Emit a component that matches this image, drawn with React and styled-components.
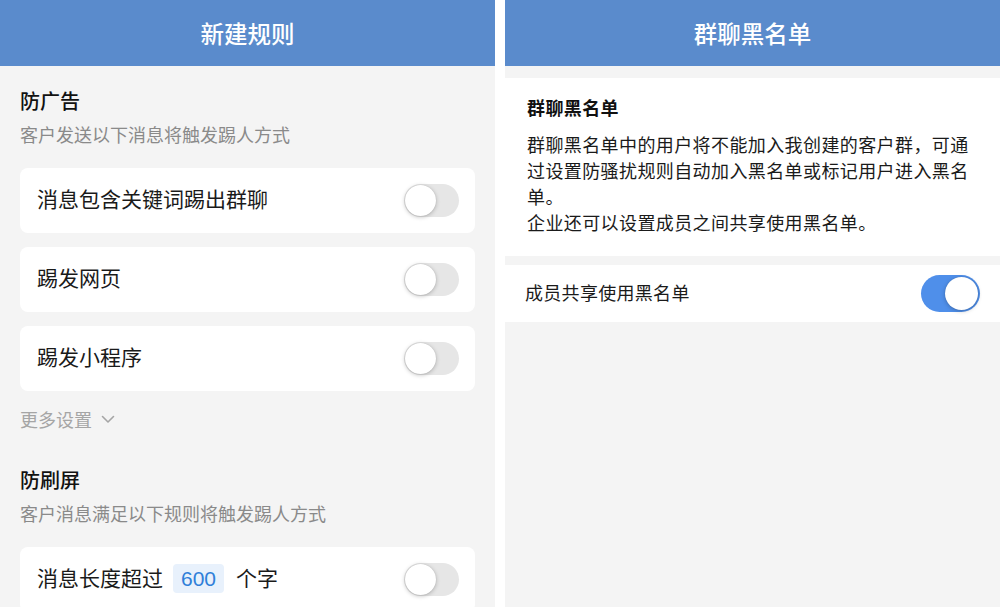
import React from 'react'
import styled, { createGlobalStyle } from 'styled-components'

const Global = createGlobalStyle`
  html, body { margin: 0; padding: 0; background: #ffffff; }
  body { font-family: "Noto Sans CJK SC", "Noto Sans", sans-serif; }
  * { box-sizing: border-box; }
`

const Page = styled.div`
  display: flex;
  gap: 10px;
  width: 1000px;
  height: 607px;
  overflow: hidden;
  background: #ffffff;
`

const Panel = styled.div`
  display: flex;
  flex-direction: column;
  width: ${p => p.width || 'auto'};
  flex: ${p => (p.width ? 'none' : '1')};
  height: 100%;
  background: #f4f4f4;
  overflow: hidden;
`

const NavBar = styled.div`
  flex: none;
  height: 66px;
  padding-bottom: 1px;
  display: flex;
  align-items: center;
  justify-content: center;
  background: #5a8bcc;
  color: #ffffff;
  font-size: 23.5px;
  font-weight: 500;
`

const Content = styled.div`
  display: flex;
  flex-direction: column;
  padding: 21px 20px 0 20px;
`

const SectionTitle = styled.div`
  font-size: 20px;
  line-height: 28px;
  font-weight: 500;
  color: #111;
  margin-top: ${p => p.mt || 0}px;
`

const SectionDesc = styled.div`
  font-size: 18px;
  line-height: 26px;
  color: #8a8a8a;
  margin-top: 6px;
  margin-bottom: 21px;
`

const Card = styled.div`
  display: flex;
  align-items: center;
  justify-content: space-between;
  height: 65px;
  padding: 0 16px 0 17px;
  background: #ffffff;
  border-radius: 8px;
  margin-bottom: 14px;
`

const CardLabel = styled.div`
  display: flex;
  align-items: center;
  padding-bottom: 5px;
  font-size: 21px;
  line-height: 30px;
  color: #1a1a1a;
`

const Chip = styled.span`
  display: inline-flex;
  align-items: center;
  justify-content: center;
  width: 51px;
  height: 29px;
  margin: 3px 12px 0 10px;
  border-radius: 4px;
  background: #e8f1fc;
  color: #2f7fd9;
  font-family: "Liberation Sans", Arial, sans-serif;
  font-size: 21px;
`

const Track = styled.div`
  position: relative;
  flex: none;
  width: ${p => p.w}px;
  height: ${p => p.h}px;
  border-radius: ${p => p.h / 2}px;
  background: ${p => (p.on ? '#4f8fea' : '#e6e6e6')};
`

const Knob = styled.div`
  position: absolute;
  top: ${p => p.top}px;
  left: ${p => (p.on ? 'auto' : '1px')};
  right: ${p => (p.on ? '2px' : 'auto')};
  width: ${p => p.d}px;
  height: ${p => p.d}px;
  border-radius: 50%;
  background: #ffffff;
  box-shadow: 0 1px 4px rgba(0, 0, 0, 0.25), 0 0 1px rgba(0, 0, 0, 0.15);
`

const MoreLink = styled.div`
  display: flex;
  align-items: center;
  gap: 9px;
  margin-top: 1px;
  font-size: 18px;
  line-height: 26px;
  color: #a5a5a5;
`

const InfoCard = styled.div`
  margin-top: 12px;
  padding: 16px 22px 21px 22px;
  background: #ffffff;
`

const InfoTitle = styled.div`
  font-size: 18px;
  line-height: 26px;
  font-weight: 600;
  color: #111;
  letter-spacing: 0.4px;
`

const InfoText = styled.p`
  margin: 11px 0 0;
  font-size: 18px;
  line-height: 26px;
  color: #1a1a1a;
  letter-spacing: 0.4px;
`

const SettingRow = styled.div`
  display: flex;
  align-items: center;
  justify-content: space-between;
  height: 57px;
  margin-top: 9px;
  padding: 0 20px;
  background: #ffffff;
  font-size: 18px;
  color: #1a1a1a;
  letter-spacing: 0.3px;
`

const RowLabel = styled.span`
  padding-bottom: 3px;
`

const Toggle = ({ on, big }) => {
  const w = big ? 59 : 55
  const h = big ? 37 : 33
  const d = big ? 33 : 31
  return (
    <Track on={on ? 1 : 0} w={w} h={h}>
      <Knob on={on ? 1 : 0} d={d} top={big ? 2 : 1} />
    </Track>
  )
}

const Chevron = () => (
  <svg width="14" height="9" viewBox="0 0 14 9" fill="none">
    <path d="M1.5 1.5 L7 7 L12.5 1.5" stroke="#a5a5a5" strokeWidth="1.6" strokeLinecap="round" strokeLinejoin="round" />
  </svg>
)

export default function App() {
  return (
    <>
      <Global />
      <Page>
        <Panel width="495px">
          <NavBar>新建规则</NavBar>
          <Content>
            <SectionTitle>防广告</SectionTitle>
            <SectionDesc>客户发送以下消息将触发踢人方式</SectionDesc>
            <Card>
              <CardLabel>消息包含关键词踢出群聊</CardLabel>
              <Toggle />
            </Card>
            <Card>
              <CardLabel>踢发网页</CardLabel>
              <Toggle />
            </Card>
            <Card>
              <CardLabel>踢发小程序</CardLabel>
              <Toggle />
            </Card>
            <MoreLink>
              更多设置
              <Chevron />
            </MoreLink>
            <SectionTitle mt={34}>防刷屏</SectionTitle>
            <SectionDesc>客户消息满足以下规则将触发踢人方式</SectionDesc>
            <Card>
              <CardLabel>
                消息长度超过<Chip>600</Chip>个字
              </CardLabel>
              <Toggle />
            </Card>
          </Content>
        </Panel>
        <Panel>
          <NavBar>群聊黑名单</NavBar>
          <InfoCard>
            <InfoTitle>群聊黑名单</InfoTitle>
            <InfoText>
              群聊黑名单中的用户将不能加入我创建的客户群，可通过设置防骚扰规则自动加入黑名单或标记用户进入黑名单。
              <br />
              企业还可以设置成员之间共享使用黑名单。
            </InfoText>
          </InfoCard>
          <SettingRow>
            <RowLabel>成员共享使用黑名单</RowLabel>
            <Toggle on big />
          </SettingRow>
        </Panel>
      </Page>
    </>
  )
}
